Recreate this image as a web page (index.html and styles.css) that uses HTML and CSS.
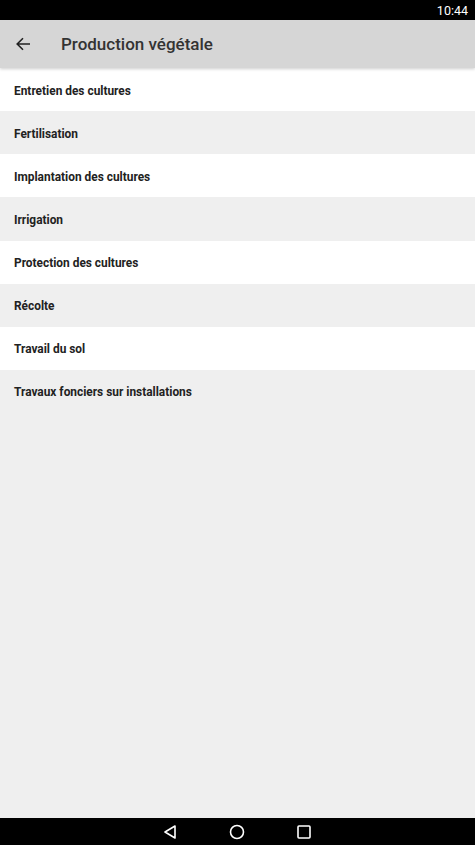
FILE: index.html
```html
<!DOCTYPE html>
<html>
<head>
<meta charset="utf-8">
<link rel="stylesheet" href="styles.css">
</head>
<body>
<div class="screen">
  <div class="status"><span class="time">10:44</span></div>
  <header class="appbar">
    <svg class="back" width="16" height="16" viewBox="0 0 16 16"><path d="M15 8H2.5M8 2.2L2.2 8L8 13.8" fill="none" stroke="#222" stroke-width="1.6"/></svg>
    <span class="title">Production végétale</span>
  </header>
  <main class="list">
    <div class="row odd">Entretien des cultures</div>
    <div class="row">Fertilisation</div>
    <div class="row odd">Implantation des cultures</div>
    <div class="row">Irrigation</div>
    <div class="row odd">Protection des cultures</div>
    <div class="row">Récolte</div>
    <div class="row odd">Travail du sol</div>
    <div class="row">Travaux fonciers sur installations</div>
  </main>
  <footer class="nav">
    <svg width="16" height="16" viewBox="0 0 16 16"><path d="M13 2L3 8L13 14Z" fill="none" stroke="#fff" stroke-width="1.6" stroke-linejoin="round"/></svg>
    <svg width="16" height="16" viewBox="0 0 16 16"><circle cx="8" cy="8" r="6.5" fill="none" stroke="#fff" stroke-width="1.6"/></svg>
    <svg width="16" height="16" viewBox="0 0 16 16"><rect x="2" y="2" width="12" height="12" rx="1" fill="none" stroke="#fff" stroke-width="1.6"/></svg>
  </footer>
</div>
</body>
</html>
```
FILE: styles.css
```css
* { box-sizing: border-box; }
html, body { margin: 0; padding: 0; }
body { font-family: Roboto, "Noto Sans", sans-serif; background: #efefef; }
.screen { width: 475px; height: 845px; display: flex; flex-direction: column; background: #efefef; }
.status { height: 20px; background: #000; color: #fff; display: flex; justify-content: flex-end; align-items: center; padding-right: 7px; font-size: 12.5px; }
.appbar { height: 48px; background: #d6d6d6; display: flex; align-items: center; box-shadow: 0 1px 3px rgba(0,0,0,0.2); position: relative; z-index: 1; }
.back { margin-left: 15px; margin-right: 30px; }
.title { font-size: 17px; color: #333; font-weight: 500; }
.list { flex: 1; display: flex; flex-direction: column; }
.row { height: 43.13px; display: flex; align-items: center; padding-left: 14px; padding-top: 2px; font-size: 11.9px; font-weight: 700; color: #222; background: #efefef; }
.row.odd { background: #fff; }
.nav { height: 27px; background: #000; display: flex; justify-content: center; align-items: center; gap: 51px; padding-right: 2px; }
```
